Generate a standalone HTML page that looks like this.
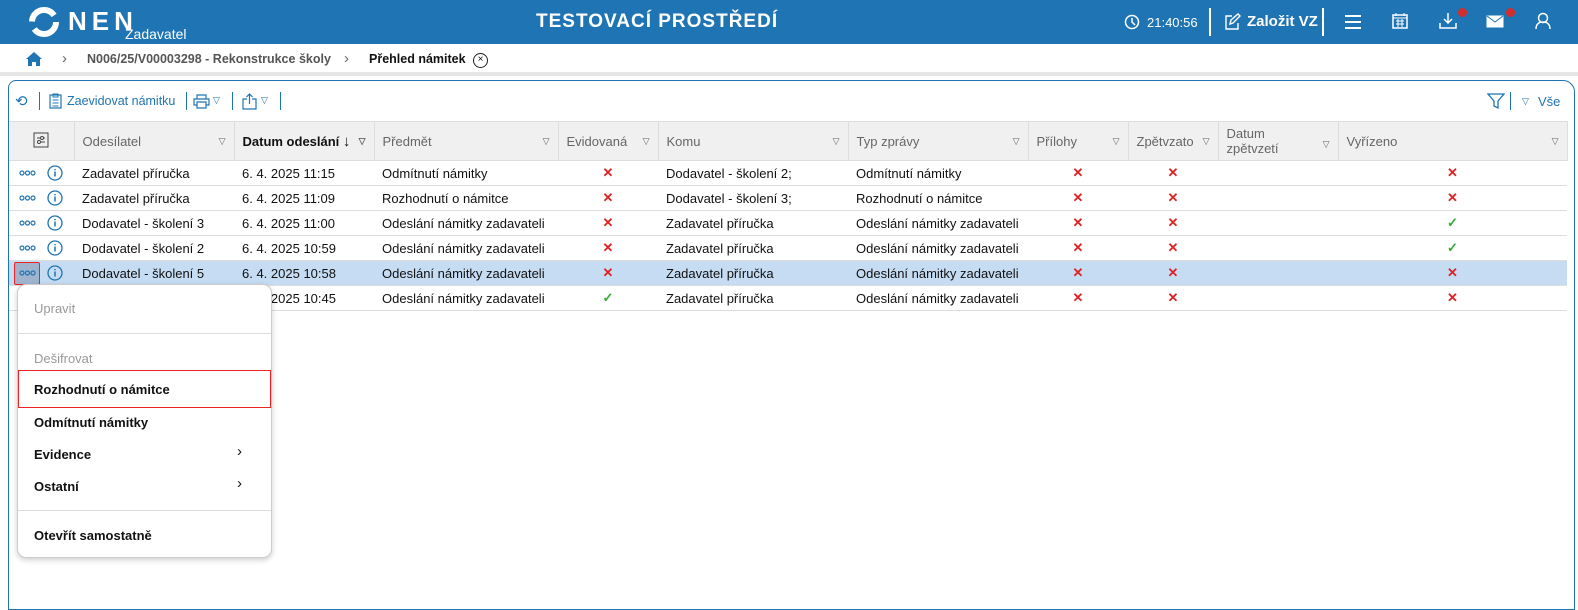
<!DOCTYPE html>
<html><head><meta charset="utf-8"><style>
*{box-sizing:border-box;margin:0;padding:0}
body{width:1578px;height:594px;overflow:hidden;background:#fff;font-family:"Liberation Sans",sans-serif;font-size:13px;color:#111;position:relative}
.a{position:absolute}
.hdr{left:0;top:0;width:1578px;height:44px;background:#1f74b4;color:#fff}
.bc{top:44px;left:0;width:1578px;height:32px;background:#fff;border-bottom:4px solid #e6e6e6}
.panel{left:8px;top:80px;width:1567px;height:530px;border:1px solid #1f74b4;border-radius:8px 12px 0 0;background:#fff}
table{position:absolute;left:9px;top:121px;border-collapse:collapse;table-layout:fixed}
th{background:#f0f0f0;height:39px;font-weight:normal;color:#666;text-align:left;padding:0 8px;border-right:1px solid #ddd;border-top:1px solid #ddd;border-bottom:1px solid #ddd;position:relative;font-size:13px;line-height:15px}
th .f{position:absolute;right:8px;top:12px;font-size:9px;color:#666}
td{height:25px;border-bottom:1px solid #ddd;padding:0 8px;white-space:nowrap;font-size:13px}
td.c{text-align:center}
.x{color:#d22;font-weight:bold;font-size:13px}
.v{color:#3a3;font-weight:bold}
tr.sel td{background:#c5dcf3}
.ic{position:relative;display:inline-block;width:48px;height:16px;vertical-align:middle}
.menu{left:17px;top:284px;width:255px;height:274px;background:#fff;border:1px solid #ccc;border-radius:9px;box-shadow:0 2px 6px rgba(0,0,0,.2)}
.mi{position:absolute;left:16px;font-size:13px}
</style></head><body>
<div class="a hdr">
 <svg class="a" style="left:28px;top:6px" width="32" height="32" viewBox="0 0 32 32"><circle cx="16" cy="16" r="12" fill="none" stroke="#fff" stroke-width="6" stroke-dasharray="30 8"/></svg>
 <div class="a" style="left:68px;top:6px;font-size:26px;font-weight:bold;letter-spacing:5px">NEN</div>
 <div class="a" style="left:125px;top:26px;font-size:14px">Zadavatel</div>
 <div class="a" style="left:536px;top:11px;font-size:19px;font-weight:bold;letter-spacing:1px">TESTOVACÍ PROSTŘEDÍ</div>
 <svg class="a" style="left:1124px;top:14px" width="16" height="16" viewBox="0 0 16 16"><circle cx="8" cy="8" r="6.5" fill="none" stroke="#fff" stroke-width="1.5"/><path d="M8 4v4l3 3" fill="none" stroke="#fff" stroke-width="1.5"/></svg>
 <div class="a" style="left:1147px;top:15px;font-size:13px">21:40:56</div>
 <div class="a" style="left:1209px;top:8px;width:2px;height:28px;background:#fff"></div>
 <svg class="a" style="left:1222px;top:12px" width="20" height="20" viewBox="0 0 20 20"><path d="M10 4H4v13h12v-6M8 12l1-4 7-6 2 2-7 7z" fill="none" stroke="#fff" stroke-width="1.4"/></svg>
 <div class="a" style="left:1247px;top:13px;font-size:15px;font-weight:bold">Založit VZ</div>
 <div class="a" style="left:1322px;top:8px;width:2px;height:28px;background:#fff"></div>
 <svg class="a" style="left:1344px;top:14px" width="18" height="16"><path d="M1 2h16M1 8h16M1 14h16" stroke="#fff" stroke-width="2"/></svg>
 <svg class="a" style="left:1392px;top:12px" width="16" height="18"><rect x="1" y="3" width="14" height="13" fill="none" stroke="#fff" stroke-width="1.5"/><path d="M1 6h14M4 1v3M12 1v3M4 9h8M4 12h8M6 7v8M10 7v8" stroke="#fff"/></svg>
 <svg class="a" style="left:1439px;top:12px" width="18" height="18"><path d="M9 1v9M5 7l4 4 4-4M1 11v5h16v-5" fill="none" stroke="#fff" stroke-width="1.5"/></svg>
 <div class="a" style="left:1458px;top:8px;width:9px;height:9px;border-radius:50%;background:#d42b2b"></div>
 <svg class="a" style="left:1486px;top:15px" width="18" height="13"><rect x="0.5" y="0.5" width="17" height="12" fill="#fff"/><path d="M1 1l8 6 8-6" fill="none" stroke="#1f74b4"/></svg>
 <div class="a" style="left:1506px;top:8px;width:9px;height:9px;border-radius:50%;background:#d42b2b"></div>
 <svg class="a" style="left:1535px;top:12px" width="16" height="18"><circle cx="8" cy="6" r="4.5" fill="none" stroke="#fff" stroke-width="1.5"/><path d="M1 17c0-5 3-7 7-7s7 2 7 7" fill="none" stroke="#fff" stroke-width="1.5"/></svg>
</div>
<div class="a bc">
 <svg class="a" style="left:25px;top:7px" width="18" height="16"><path d="M9 1L1 8h2v7h4v-4h4v4h4V8h2z" fill="#1f74b4"/></svg>
 <div class="a" style="left:62px;top:6px;color:#666;font-size:15px">›</div>
 <div class="a" style="left:87px;top:8px;color:#555;font-weight:bold;font-size:12.5px">N006/25/V00003298 - Rekonstrukce školy</div>
 <div class="a" style="left:344px;top:6px;color:#666;font-size:15px">›</div>
 <div class="a" style="left:369px;top:8px;font-weight:bold;font-size:12.5px">Přehled námitek</div>
 <div class="a" style="left:473px;top:9px;width:15px;height:15px;border:1.3px solid #222;border-radius:50%;font-size:10px;text-align:center;line-height:12px">×</div>
</div>
<div class="a panel"></div>
<div class="a" style="left:15px;top:92px;color:#1f74b4;font-size:15px">⟲</div>
<div class="a" style="left:39px;top:92px;width:1px;height:18px;background:#1f74b4"></div>
<svg class="a" style="left:49px;top:93px" width="13" height="16"><rect x="1" y="2" width="11" height="13" fill="none" stroke="#1f74b4" stroke-width="1.2"/><path d="M4 1h5v3H4zM3.5 7h6M3.5 10h6M3.5 13h6" fill="none" stroke="#1f74b4"/></svg>
<div class="a" style="left:67px;top:94px;color:#1f74b4;font-size:12.5px">Zaevidovat námitku</div>
<div class="a" style="left:186px;top:92px;width:1px;height:18px;background:#1f74b4"></div>
<svg class="a" style="left:193px;top:94px" width="17" height="15"><path d="M4 5V1h9v4M4 11H1V5h15v6h-3M4 8h9v6H4z" fill="none" stroke="#1f74b4" stroke-width="1.2"/></svg>
<div class="a" style="left:213px;top:95px;color:#1f74b4;font-size:9px">▽</div>
<div class="a" style="left:232px;top:92px;width:1px;height:18px;background:#1f74b4"></div>
<svg class="a" style="left:242px;top:93px" width="16" height="17"><path d="M5 6H1v10h13V6h-4M7.5 11V1M4.5 4l3-3 3 3" fill="none" stroke="#1f74b4" stroke-width="1.2"/></svg>
<div class="a" style="left:261px;top:95px;color:#1f74b4;font-size:9px">▽</div>
<div class="a" style="left:280px;top:92px;width:1px;height:18px;background:#1f74b4"></div>
<svg class="a" style="left:1487px;top:92px" width="18" height="18"><path d="M1 2h16l-6 7v7l-4-2V9z" fill="none" stroke="#1f74b4" stroke-width="1.3"/></svg>
<div class="a" style="left:1510px;top:92px;width:1px;height:18px;background:#1f74b4"></div>
<div class="a" style="left:1522px;top:96px;color:#1f74b4;font-size:9px">▽</div>
<div class="a" style="left:1538px;top:94px;color:#1f74b4;font-size:13px">Vše</div>
<svg width="0" height="0" style="position:absolute"><defs>
<symbol id="ic" viewBox="0 0 48 16"><circle cx="4" cy="8" r="2" fill="none" stroke="#1f74b4" stroke-width="1.2"/><circle cx="9.5" cy="8" r="2" fill="none" stroke="#1f74b4" stroke-width="1.2"/><circle cx="15" cy="8" r="2" fill="none" stroke="#1f74b4" stroke-width="1.2"/><circle cx="37" cy="8" r="7" fill="none" stroke="#1f74b4" stroke-width="1.3"/><path d="M37 6.5v5M37 4v1.2" stroke="#1f74b4" stroke-width="1.5"/></symbol></defs></svg>
<table>
<colgroup><col style="width:64px"><col style="width:160px"><col style="width:140px"><col style="width:184px"><col style="width:100px"><col style="width:190px"><col style="width:180px"><col style="width:100px"><col style="width:90px"><col style="width:120px"><col style="width:229px"></colgroup>
<tr><th style="text-align:center"><svg width="16" height="16"><rect x="1" y="1" width="14" height="14" fill="none" stroke="#444"/><path d="M4 6h8M4 10h8" stroke="#444"/><circle cx="9" cy="6" r="1.5" fill="#fff" stroke="#444"/><circle cx="6" cy="10" r="1.5" fill="#fff" stroke="#444"/></svg></th>
<th>Odesílatel<span class="f">▽</span></th>
<th style="color:#111;font-weight:bold">Datum odeslání <span style="font-weight:normal;font-size:15px">↓</span><span class="f">▽</span></th>
<th>Předmět<span class="f">▽</span></th>
<th>Evidovaná<span class="f">▽</span></th>
<th>Komu<span class="f">▽</span></th>
<th>Typ zprávy<span class="f">▽</span></th>
<th>Přílohy<span class="f">▽</span></th>
<th>Zpětvzato<span class="f">▽</span></th>
<th>Datum<br>zpětvzetí<span class="f" style="top:15px">▽</span></th>
<th>Vyřízeno<span class="f">▽</span></th></tr>
<tr><td style="padding-left:9px"><svg class="ic"><use href="#ic"/></svg></td><td>Zadavatel příručka</td><td>6. 4. 2025 11:15</td><td>Odmítnutí námitky</td><td class="c x">✕</td><td>Dodavatel - školení 2;</td><td>Odmítnutí námitky</td><td class="c x">✕</td><td class="c x">✕</td><td></td><td class="c x">✕</td></tr>
<tr><td style="padding-left:9px"><svg class="ic"><use href="#ic"/></svg></td><td>Zadavatel příručka</td><td>6. 4. 2025 11:09</td><td>Rozhodnutí o námitce</td><td class="c x">✕</td><td>Dodavatel - školení 3;</td><td>Rozhodnutí o námitce</td><td class="c x">✕</td><td class="c x">✕</td><td></td><td class="c x">✕</td></tr>
<tr><td style="padding-left:9px"><svg class="ic"><use href="#ic"/></svg></td><td>Dodavatel - školení 3</td><td>6. 4. 2025 11:00</td><td>Odeslání námitky zadavateli</td><td class="c x">✕</td><td>Zadavatel příručka</td><td>Odeslání námitky zadavateli</td><td class="c x">✕</td><td class="c x">✕</td><td></td><td class="c v">✓</td></tr>
<tr><td style="padding-left:9px"><svg class="ic"><use href="#ic"/></svg></td><td>Dodavatel - školení 2</td><td>6. 4. 2025 10:59</td><td>Odeslání námitky zadavateli</td><td class="c x">✕</td><td>Zadavatel příručka</td><td>Odeslání námitky zadavateli</td><td class="c x">✕</td><td class="c x">✕</td><td></td><td class="c v">✓</td></tr>
<tr class="sel"><td style="position:relative;padding-left:9px"><span class="a" style="left:5px;top:1px;width:26px;height:23px;background:#9fb4cc;border:1px solid #e22;border-radius:2px"></span><svg class="ic"><use href="#ic"/></svg></td><td>Dodavatel - školení 5</td><td>6. 4. 2025 10:58</td><td>Odeslání námitky zadavateli</td><td class="c x">✕</td><td>Zadavatel příručka</td><td>Odeslání námitky zadavateli</td><td class="c x">✕</td><td class="c x">✕</td><td></td><td class="c x">✕</td></tr>
<tr><td></td><td></td><td>6. 4. 2025 10:45</td><td>Odeslání námitky zadavateli</td><td class="c v">✓</td><td>Zadavatel příručka</td><td>Odeslání námitky zadavateli</td><td class="c x">✕</td><td class="c x">✕</td><td></td><td class="c x">✕</td></tr>
</table>
<div class="a menu">
 <div class="mi" style="top:16px;color:#999">Upravit</div>
 <div class="a" style="left:0;top:48px;width:253px;height:1px;background:#ddd"></div>
 <div class="mi" style="top:66px;color:#999">Dešifrovat</div>
 <div class="a" style="left:0;top:85px;width:253px;height:38px;border:1px solid #e22"></div>
 <div class="mi" style="top:97px;font-weight:bold">Rozhodnutí o námitce</div>
 <div class="mi" style="top:130px;font-weight:bold">Odmítnutí námitky</div>
 <div class="mi" style="top:162px;font-weight:bold">Evidence</div><div class="a" style="left:219px;top:158px;font-size:15px">›</div>
 <div class="mi" style="top:194px;font-weight:bold">Ostatní</div><div class="a" style="left:219px;top:190px;font-size:15px">›</div>
 <div class="a" style="left:0;top:225px;width:253px;height:1px;background:#ddd"></div>
 <div class="mi" style="top:243px;font-weight:bold">Otevřít samostatně</div>
</div>
</body></html>
